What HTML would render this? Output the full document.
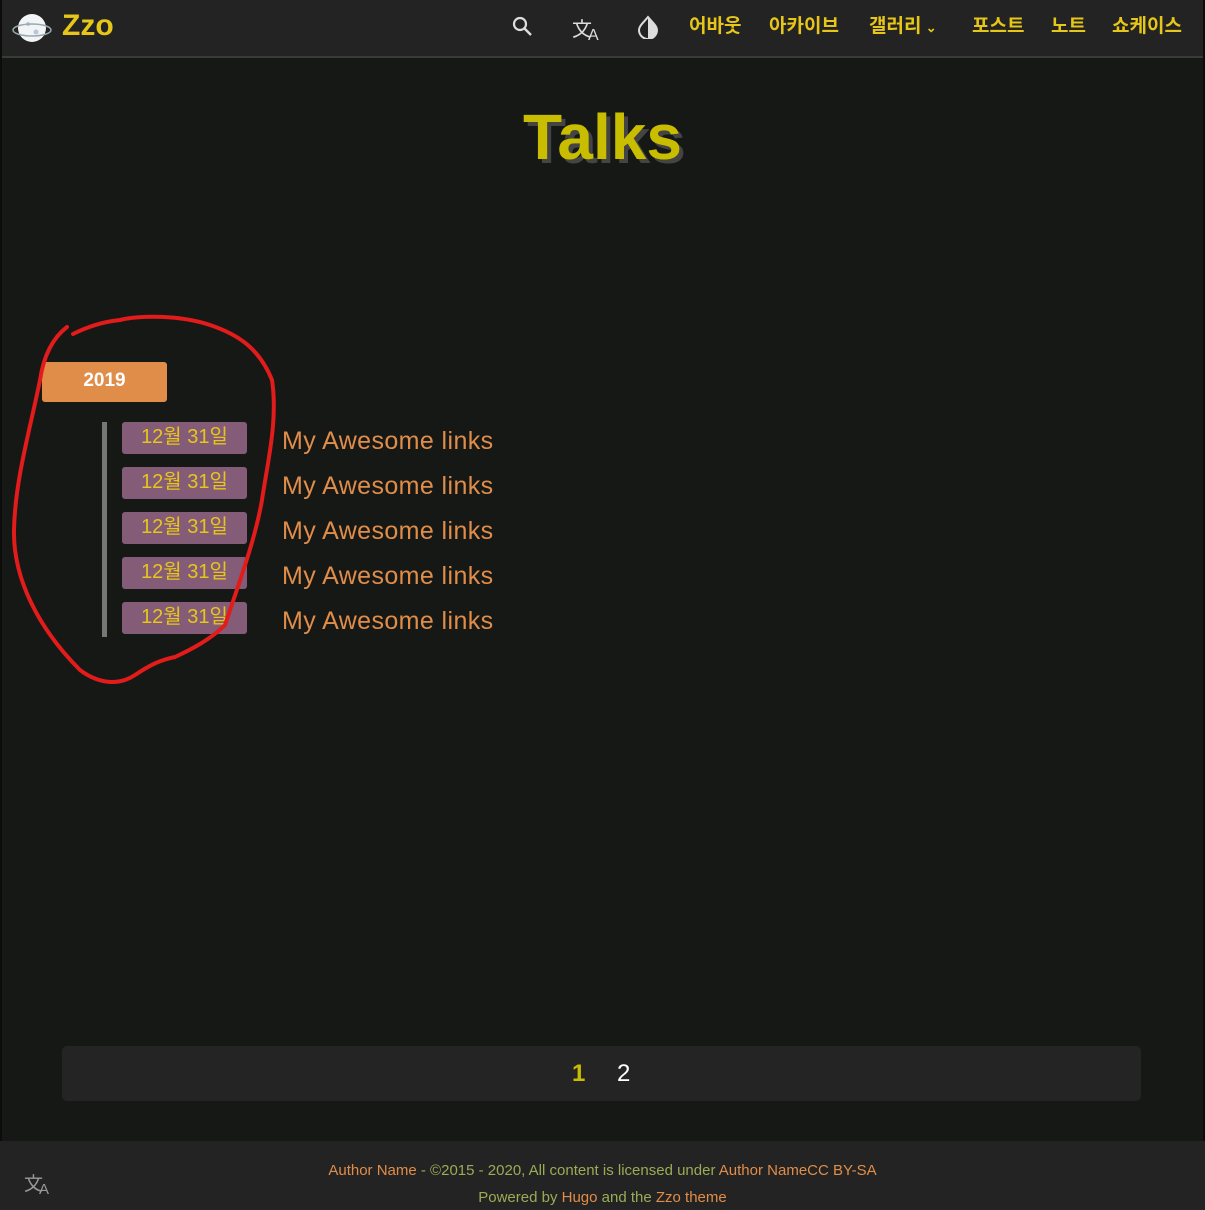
<!DOCTYPE html>
<html><head><meta charset="utf-8"><style>
*{margin:0;padding:0;box-sizing:border-box}
body{width:1205px;height:1210px;background:#161816;font-family:"Liberation Sans","Noto Sans CJK KR",sans-serif;position:relative;overflow:hidden}
.edge{position:absolute;top:0;width:2px;height:1210px;background:#0c0c0c}
.hdr{position:absolute;left:0;top:0;width:1205px;height:58px;background:#232323;border-bottom:2px solid #3a3a3a}
.logo{position:absolute;left:62px;top:9px;font-size:30px;font-weight:bold;color:#e6c619}
.nav{position:absolute;top:11px;font-size:19px;font-weight:bold;color:#e6c619;font-family:"Noto Sans CJK KR",sans-serif}
h1{position:absolute;left:0;width:1205px;top:100px;text-align:center;font-size:64px;font-weight:bold;color:#c9bd00;text-shadow:4px 4px 0 #444;letter-spacing:0px}
.year{position:absolute;left:42px;top:362px;width:125px;height:40px;background:#e08d4a;border-radius:3px;color:#fff;font-weight:bold;font-size:19px;text-align:center;line-height:38px}
.line{position:absolute;left:102px;top:422px;width:5px;height:215px;background:#777}
.date{position:absolute;left:122px;width:125px;height:32px;background:#845c78;border-radius:3px;color:#e6c619;font-size:20px;text-align:center;line-height:31px;font-family:"Liberation Sans","Noto Sans CJK KR",sans-serif}
.t{position:absolute;left:282px;font-size:25px;color:#e08d4a;letter-spacing:0.4px}
.pag{position:absolute;left:62px;top:1046px;width:1079px;height:55px;background:#242424;border-radius:5px}
.foot{position:absolute;left:0;top:1141px;width:1205px;height:69px;background:#232323;text-align:center;font-size:15px;color:#9aac55}
.foot a{color:#e08d4a}
</style></head><body>
<div class="hdr">
<svg style="position:absolute;left:12px;top:10px" width="40" height="36" viewBox="0 0 40 36"><circle cx="20" cy="18" r="14" fill="#f2f4f8"/><circle cx="16" cy="14" r="2" fill="#b8c8d8"/><circle cx="24" cy="22" r="2.5" fill="#b8c8d8"/><ellipse cx="20" cy="20" rx="19" ry="6" fill="none" stroke="#9aa" stroke-width="1.5"/></svg>
<div class="logo">Zzo</div>
<svg style="position:absolute;left:511px;top:15px" width="22" height="22" viewBox="0 0 22 22"><circle cx="9" cy="9" r="6" fill="none" stroke="#ddd" stroke-width="2.2"/><path d="M13 13l7 7" stroke="#ddd" stroke-width="2.4"/></svg>
<div style="position:absolute;left:572px;top:13px;color:#ddd;font-size:20px">文<span style="font-size:16px;position:relative;top:4px;left:-4px">A</span></div>
<svg style="position:absolute;left:637px;top:15px" width="22" height="24" viewBox="0 0 22 24"><path d="M11 2C6 8 2 11 2 15a9 9 0 0 0 18 0c0-4-4-7-9-13z" fill="none" stroke="#ddd" stroke-width="2"/><path d="M11 2c5 6 9 9 9 13a9 9 0 0 1-9 9z" fill="#ddd"/></svg>
<div class="nav" style="left:689px">어바웃</div>
<div class="nav" style="left:769px">아카이브</div>
<div class="nav" style="left:869px">갤러리 <span style="font-size:13px">⌄</span></div>
<div class="nav" style="left:972px">포스트</div>
<div class="nav" style="left:1051px">노트</div>
<div class="nav" style="left:1112px">쇼케이스</div>
</div>
<div class="edge" style="left:0"></div><div class="edge" style="right:0"></div>
<h1>Talks</h1>
<div class="year">2019</div>
<div class="line"></div>
<div class="date" style="top:422px">12월 31일</div>
<div class="date" style="top:467px">12월 31일</div>
<div class="date" style="top:512px">12월 31일</div>
<div class="date" style="top:557px">12월 31일</div>
<div class="date" style="top:602px">12월 31일</div>
<div class="t" style="top:427px">My Awesome links</div>
<div class="t" style="top:472px">My Awesome links</div>
<div class="t" style="top:517px">My Awesome links</div>
<div class="t" style="top:562px">My Awesome links</div>
<div class="t" style="top:607px">My Awesome links</div>
<svg style="position:absolute;left:0;top:0" width="1205" height="1210"><path d="M67 327C50 340 43 360 40 380 30 430 15 480 14 530 13 580 40 630 80 670 100 685 120 685 135 675 150 665 160 660 175 657 190 650 210 640 225 625 240 580 255 540 262 500 268 460 278 420 272 380 260 350 240 335 210 325 180 315 140 315 120 320 100 322 85 328 73 334" fill="none" stroke="#e21b1b" stroke-width="4" stroke-linecap="round"/></svg>
<div class="pag"><span style="position:absolute;left:510px;top:14px;font-size:24px;color:#c9bd00;font-weight:bold">1</span><span style="position:absolute;left:555px;top:14px;font-size:24px;color:#fff">2</span></div>
<div class="foot">
<div style="position:absolute;left:24px;top:28px;color:#999;font-size:19px">文<span style="font-size:15px;position:relative;top:4px;left:-4px">A</span></div>
<div style="position:absolute;top:21px;width:100%"><a>Author Name</a> - ©2015 - 2020, All content is licensed under <a>Author NameCC BY-SA</a></div>
<div style="position:absolute;top:48px;width:100%">Powered by <a>Hugo</a> and the <a>Zzo theme</a></div>
</div>
</body></html>
